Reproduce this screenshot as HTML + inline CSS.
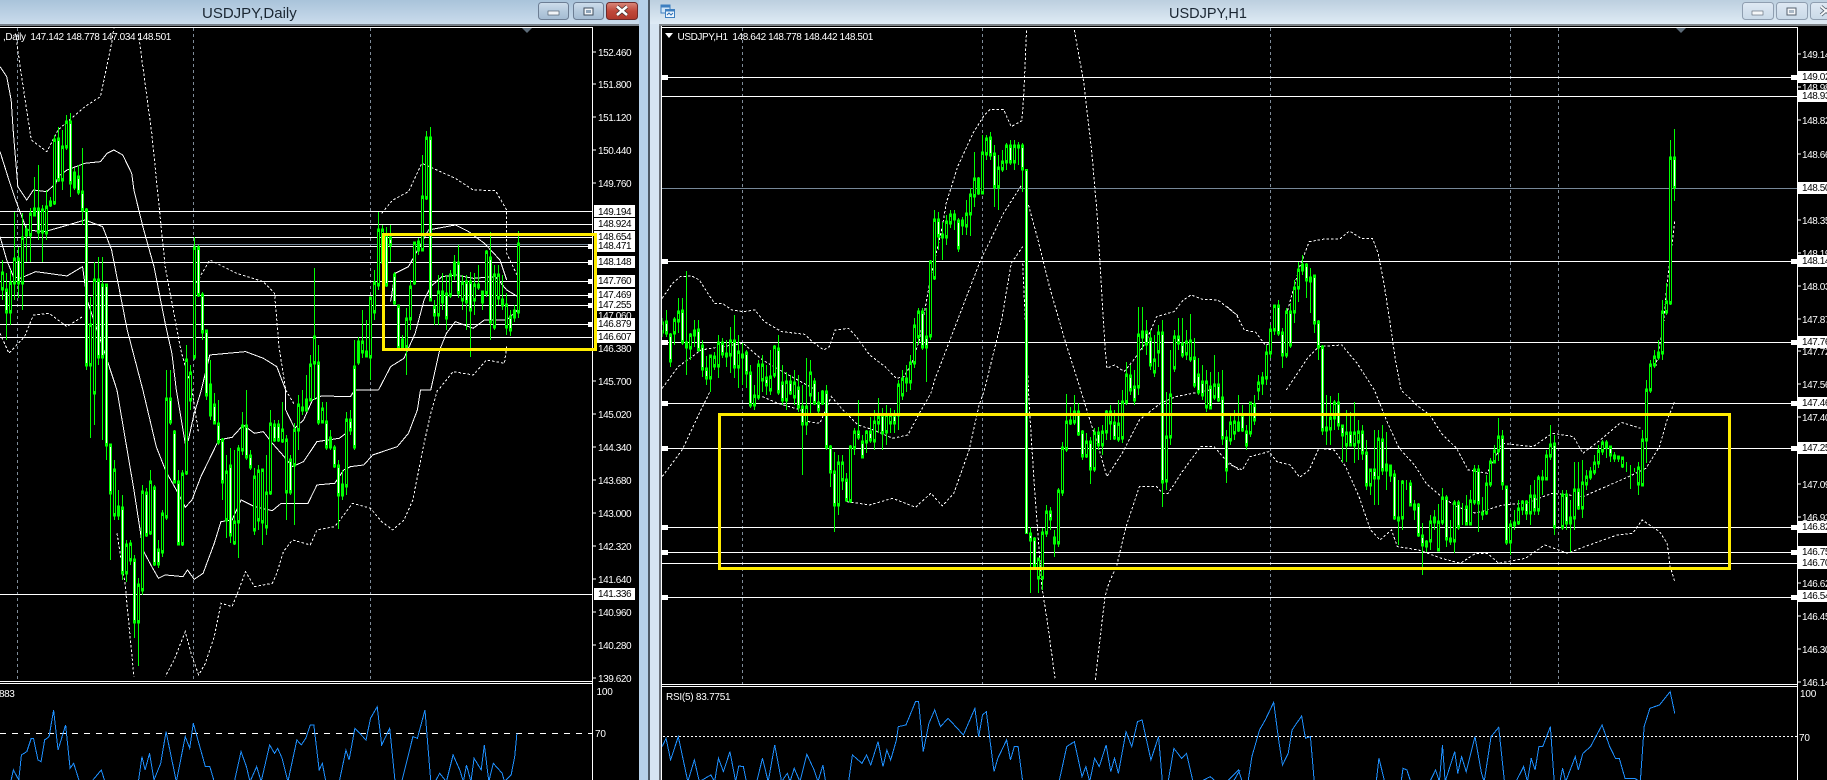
<!DOCTYPE html>
<html><head><meta charset="utf-8"><title>USDJPY charts</title>
<style>
html,body{margin:0;padding:0;background:#000;width:1827px;height:780px;overflow:hidden}
svg{display:block;position:absolute;left:0;top:0}
.l{font:10px "Liberation Sans",sans-serif;letter-spacing:-.43px;fill:#fff}
.b{font:10px "Liberation Sans",sans-serif;letter-spacing:-.43px;fill:#000}
.t{font:15px "Liberation Sans",sans-serif;fill:#1b2733}
.d polyline{fill:none;stroke:#fff;stroke-width:1;stroke-dasharray:2.5 2;vector-effect:non-scaling-stroke}
.s polyline{fill:none;stroke:#fff;stroke-width:1;vector-effect:non-scaling-stroke}
.r polyline{fill:none;stroke:#1e90ff;stroke-width:1;vector-effect:non-scaling-stroke}
</style></head><body>
<svg width="1827" height="780" viewBox="0 0 1827 780" xmlns="http://www.w3.org/2000/svg">
<defs>
<linearGradient id="g1" x1="0" y1="0" x2="0" y2="1"><stop offset="0" stop-color="#a9c3da"/><stop offset="1" stop-color="#cadcec"/></linearGradient>
<linearGradient id="g2" x1="0" y1="0" x2="0" y2="1"><stop offset="0" stop-color="#bccfdf"/><stop offset="1" stop-color="#dfebf5"/></linearGradient>
<linearGradient id="bt" x1="0" y1="0" x2="0" y2="1"><stop offset="0" stop-color="#cfdeec"/><stop offset=".5" stop-color="#b5cadd"/><stop offset="1" stop-color="#a3bbd2"/></linearGradient>
<linearGradient id="bt2" x1="0" y1="0" x2="0" y2="1"><stop offset="0" stop-color="#dfe9f3"/><stop offset="1" stop-color="#c9d9e8"/></linearGradient>
<linearGradient id="rd" x1="0" y1="0" x2="0" y2="1"><stop offset="0" stop-color="#d9897c"/><stop offset=".5" stop-color="#c0483a"/><stop offset="1" stop-color="#b0392c"/></linearGradient>
<clipPath id="cl"><rect x="0" y="28" width="592" height="653"/></clipPath>
<clipPath id="cli"><rect x="0" y="685" width="592" height="95"/></clipPath>
<clipPath id="cr"><rect x="662" y="28" width="1135" height="656"/></clipPath>
<clipPath id="cri"><rect x="662" y="687" width="1135" height="93"/></clipPath>
</defs>
<!-- frames -->
<rect width="1827" height="780" fill="#000"/>
<rect x="0" y="0" width="648" height="24" fill="url(#g1)"/>
<rect x="0" y="24" width="639" height="2" fill="#767f88"/>
<rect x="639" y="0" width="9" height="780" fill="#b6d1ea"/>
<rect x="648" y="0" width="2" height="780" fill="#4c5966"/>
<rect x="650" y="0" width="1177" height="24" fill="url(#g2)"/>
<rect x="650" y="24" width="10" height="756" fill="#d7e5f2"/>
<rect x="659" y="24" width="1168" height="2" fill="#7d8388"/>
<rect x="659" y="26" width="2" height="754" fill="#6a7078"/>
<!-- titles -->
<text class="t" x="202" y="18">USDJPY,Daily</text>
<text class="t" x="1169" y="18" style="font-size:14.5px">USDJPY,H1</text>
<!-- left buttons -->
<rect x="538.5" y="2.5" width="30" height="17" rx="3" fill="url(#bt)" stroke="#6d7e94"/>
<rect x="548" y="11" width="11" height="4" fill="#f2f5f8" stroke="#3f4d5c" stroke-width=".6"/>
<rect x="573.5" y="2.5" width="30" height="17" rx="3" fill="url(#bt)" stroke="#6d7e94"/>
<rect x="584" y="8" width="9" height="7" fill="#f2f5f8" stroke="#3f4d5c"/><rect x="586" y="10" width="5" height="3" fill="#8fa5ba"/>
<rect x="606.5" y="2.5" width="31" height="17" rx="3" fill="url(#rd)" stroke="#6e2a2a"/>
<path d="M617 6.5L627 15M627 6.5L617 15" stroke="#3a2a2a" stroke-width="4"/>
<path d="M617 6.5L627 15M627 6.5L617 15" stroke="#fff" stroke-width="2.6"/>
<!-- right buttons -->
<rect x="1742.5" y="2.5" width="31" height="17" rx="3" fill="url(#bt2)" stroke="#8f9eb0"/>
<rect x="1752" y="11" width="11" height="4" fill="#f5f7f9" stroke="#55616e" stroke-width=".6"/>
<rect x="1776.5" y="2.5" width="31" height="17" rx="3" fill="url(#bt2)" stroke="#8f9eb0"/>
<rect x="1787" y="8" width="9" height="7" fill="#f5f7f9" stroke="#55616e"/><rect x="1789" y="10" width="5" height="3" fill="#aab8c6"/>
<rect x="1810.5" y="2.5" width="31" height="17" rx="3" fill="url(#bt2)" stroke="#8f9eb0"/>
<path d="M1821 6.5L1831 15M1831 6.5L1821 15" stroke="#55616e" stroke-width="3.6"/>
<path d="M1821 6.5L1831 15M1831 6.5L1821 15" stroke="#f5f7f9" stroke-width="2"/>
<!-- window icon -->
<rect x="661" y="5" width="9" height="8" fill="#cfe4f7" stroke="#3d7fc0"/><rect x="661" y="5" width="9" height="2.5" fill="#3d7fc0"/>
<rect x="665.5" y="9.5" width="9" height="8" fill="#eef6fd" stroke="#3d7fc0"/><rect x="665.5" y="9.5" width="9" height="2" fill="#3d7fc0"/>
<path d="M667 15L669 13L671 15L673 13" stroke="#2c6fb5" fill="none"/>

<g shape-rendering="crispEdges">
<!-- left chart border & separators -->
<path d="M0 27.5H592.5V780M0 681.5H592M0 683.5H592" stroke="#fff" fill="none"/>
<!-- left grid -->
<path d="M17.5 28V681M193.5 28V681M370.5 28V681" stroke="#7f8c99" stroke-dasharray="3 3" fill="none"/>
<path d="M0 244.5H592" stroke="#778899"/>
<path d="M0 211.5H592M0 224.5H592M0 237.5H592M0 246.5H592M0 262.5H592M0 281.5H592M0 295.5H592M0 305.5H592M0 324.5H592M0 337.5H592M0 594.5H592" stroke="#fff" fill="none"/>
<path d="M592 52H596M592 84H596M592 117H596M592 150H596M592 183H596M592 381H596M592 414H596M592 447H596M592 480H596M592 513H596M592 546H596M592 579H596M592 612H596M592 645H596M592 678H596" stroke="#fff"/>
<!-- left bands -->
<g clip-path="url(#cl)">
<g transform="scale(.4464 .3333)">
<g class="s">
<polyline points="0,200 15,230 25,300 30,400 40,560 60,600 75,570 105,575 125,550 130,530 150,510 170,500 190,490 225,485 240,460 255,450 275,465 295,520 300,570 320,680 345,800 370,970 385,1060 395,1170 415,1330 422,1320 435,1240 450,1175 470,1065 550,1055 590,1075 620,1100 640,1170 640,1230 660,1285 680,1260 700,1200 720,1188 785,1190 795,1170 848,1170"/>
<polyline points="0,455 20,540 35,600 60,690 100,695 140,680 190,660 230,680 250,750 285,990 320,1170 350,1340 372,1415 395,1470 415,1522 430,1500 450,1430 490,1320 520,1312 545,1275 570,1300 590,1295 610,1330 630,1360 655,1400 680,1385 710,1325 760,1315 775,1300"/>
<polyline points="0,710 15,780 30,830 45,835 80,815 150,828 185,800 195,900 225,1020 262,1170 300,1470 315,1600 320,1650 340,1700 355,1735 370,1725 410,1730 420,1710 435,1738 455,1720 480,1630 495,1565 520,1560 540,1500 570,1520 610,1532 630,1510 690,1510 710,1455 750,1450 770,1410 785,1400 815,1395 835,1365 890,1340 915,1300 935,1230 942,1170 965,1170 985,1050"/>
<polyline points="848,1170 875,1100 905,1075 930,1000 950,900 965,860 990,830 1020,825 1060,835 1110,830 1135,870 1160,890"/>
<polyline points="875,905 885,820 915,800 940,740 960,690 1020,675 1050,695 1085,730 1120,780 1135,840"/>
<polyline points="965,1170 985,1050 1000,1000 1020,965 1060,985 1085,960 1135,960 1160,930"/>
</g>
<g class="d">
<polyline points="35,100 45,200 70,420 105,455 130,390 190,320 225,290 250,130 255,85"/>
<polyline points="310,100 340,400 370,800 405,1050 430,1170 445,1300"/>
<polyline points="0,1000 20,1060 55,1010 75,945 110,940 150,980 185,950"/>
<polyline points="435,860 470,780 530,820 590,845 615,880 625,1040 640,1170 660,1215"/>
<polyline points="855,640 880,600 915,575 945,490 1020,535 1060,570 1110,572 1135,630 1135,760 1160,830"/>
<polyline points="985,1165 1015,1115 1060,1125 1090,1080 1130,1090 1135,1040"/>
<polyline points="980,1170 965,1240 950,1330 935,1430 925,1500 905,1560 880,1590 855,1565 830,1525 790,1510 770,1545 750,1580 710,1590 695,1635 655,1620 635,1655 620,1720 610,1750 570,1760 550,1715 535,1770 520,1820 495,1810 480,1910 460,1990 445,2025 430,1970 415,1895 390,1980 370,2030"/>
<polyline points="262,1600 280,1750 295,1960 300,2030"/>
</g>
</g>
</g>
<!-- left candles -->
<g transform="translate(.5 0)" clip-path="url(#cl)" fill="none">
<path stroke="#0f0" d="M2 260V300M6 273V340M10 270V325M14 212V300M18 247V298M22 213V310M26 225V262M30 208V262M34 177V215M38 165V240M42 205V262M46 190V240M50 197V207M54 135V205M58 127V182M62 130V190M66 115V150M70 113V197M74 168V190M78 165V195M82 148V225M86 208V370M90 297V438M94 262V425M98 257V365M102 257V440M106 285V460M110 445V560M114 460V520M118 490V520M122 495V580M126 540V582M130 540V565M134 555V638M138 578V666M142 485V595M146 488V537M150 470V535M154 485V566M158 540V568M162 510V557M166 370V520M170 370V425M174 430V483M178 470V545M182 470V546M186 345V475M190 365V410M194 237V360M198 245V297M202 292V340M206 330V400M210 360V420M214 393V423M218 400V445M222 438V500M226 455V538M230 448V543M234 450V545M238 445V558M242 412V455M246 390V460M250 450V470M254 468V535M258 465V530M262 470V545M266 455V535M270 410V495M274 420V442M278 420V442M282 402V443M286 435V520M290 455V495M294 423V525M298 395V450M302 390V415M306 375V412M310 355V400M314 268V400M318 345V425M322 402V415M326 402V450M330 430V450M334 445V468M338 460V529M342 470V500M346 412V495M350 410V435M354 340V450M358 337V365M362 310V358M366 320V357M370 297V380M374 270V320M378 212V290M382 225V265M386 227V287M390 225V262M394 272V305M398 306V350M402 335V348M406 308V375M410 280V330M414 243V285M418 238V255M422 155V250M426 131V200M430 127V300M434 300V325M438 275V325M442 273V310M446 275V330M450 270V298M454 255V280M458 245V298M462 275V310M466 275V330M470 272V357M474 273V315M478 265V290M482 292V310M486 250V297M490 232V340M494 265V330M498 265V305M502 275V310M506 293V335M510 310V336M514 305V322M518 231V318"/>
<path id="lk" stroke="#0f0" stroke-width="3" stroke-linecap="square" d="M2 273V289M10 283V312M14 259V283M22 238V283M26 230V235M30 214V235M34 209V215M42 210V232M46 207V233M50 202V205M54 140V203M62 147V180M66 122V147M74 173V187M90 325V365M94 280V393M114 470V515M126 545V573M130 544V560M138 585V622M142 492V590M150 482V533M162 514V552M166 399V517M182 474V544M186 360V473M190 373V400M194 248V357M210 385V415M226 472V520M234 522V543M238 449V522M242 426V450M254 477V530M258 471V520M262 470V522M266 493V527M270 424V493M282 430V441M286 440V492M294 430V465M298 405V430M302 408V410M306 400V410M310 365V400M314 337V363M322 409V422M330 438V447M342 485V495M346 420V486M358 342V362M362 342V352M366 352V356M370 298V357M374 283V312M378 230V285M382 230V262M406 319V347M410 287V319M414 243V283M418 242V250M422 197V250M426 138V198M438 292V315M442 292V302M450 275V295M454 263V275M462 283V300M474 285V300M482 292V302M486 252V293M494 275V327M498 275V298M506 305V327M514 311V317M518 244V312"/>
<path id="lw" stroke="#0f0" stroke-width="3" stroke-linecap="square" d="M6 290V312M18 259V283M38 209V232M58 139V180M70 122V183M78 177V192M82 192V210M86 210V365M98 280V357M102 285V357M106 285V445M110 445V493M118 507V515M122 508V573M134 560V622M146 493V535M154 488V564M158 550V564M170 399V422M174 432V482M178 482V544M198 248V295M202 295V332M206 331V395M214 405V423M218 424V442M222 440V482M230 466V535M246 426V457M250 456V467M274 425V440M278 425V440M290 460V492M318 363V422M326 422V447M334 448V466M338 466V495M350 420V430M354 367V447M386 235V285M390 238V245M394 275V303M398 306V348M402 340V347M430 138V300M434 307V315M446 294V318M458 263V293M466 282V302M470 282V310M478 285V287M490 258V322M502 300V305M510 317V330"/>
<path stroke="#000" d="M2 275V287M10 285V310M14 261V281M22 240V281M30 216V233M42 212V230M46 209V231M54 142V201M62 149V178M66 124V145M90 327V363M94 282V391M114 472V513M126 547V571M130 546V558M138 587V620M142 494V588M150 484V531M162 516V550M166 401V515M182 476V542M186 362V471M190 375V398M194 250V355M226 474V518M234 524V541M238 451V520M242 428V448M254 479V528M258 473V518M262 472V520M266 495V525M270 426V491M282 432V439M286 442V490M294 432V463M298 407V428M310 367V398M314 339V361M322 411V420M346 422V484M362 344V350M370 300V355M374 285V310M378 232V283M382 232V260M406 321V345M410 289V317M414 245V281M422 199V248M426 140V196M438 294V313M450 277V293M462 285V298M474 287V298M486 254V291M494 277V325M498 277V296M506 307V325M518 246V310"/>
<path stroke="#fff" d="M6 292V310M18 261V281M38 211V230M58 141V178M70 124V181M78 179V190M82 194V208M86 212V363M98 282V355M102 287V355M106 287V443M110 447V491M122 510V571M134 562V620M146 495V533M154 490V562M158 552V562M170 401V420M174 434V480M178 484V542M198 250V293M202 297V330M206 333V393M214 407V421M218 426V440M222 442V480M230 468V533M246 428V455M250 458V465M274 427V438M278 427V438M290 462V490M318 365V420M326 424V445M334 450V464M338 468V493M350 422V428M354 369V445M386 237V283M390 240V243M394 277V301M398 308V346M430 140V298M434 309V313M446 296V316M458 265V291M466 284V300M470 284V308M490 260V320M510 319V328"/>
</g>
<!-- left rsi -->
<g clip-path="url(#cli)"><g transform="translate(0 390) scale(.4464 .3333)">
<path d="M0 1030.5H1327" stroke="#fff" stroke-dasharray="6 6" vector-effect="non-scaling-stroke" fill="none"/>
<g class="r"><polyline points="25,1170 30,1140 42,1170 48,1095 60,1085 70,1045 75,1045 85,1110 92,1115 100,1050 110,1040 120,960 130,1080 147,1005 157,1135 165,1120 178,1175 205,1175 227,1140 235,1175 310,1175 318,1100 325,1140 335,1090 345,1170 360,1120 372,1025 395,1175 415,1040 425,1075 433,1000 460,1130 470,1130 480,1175 525,1175 540,1085 552,1130 560,1175 575,1130 585,1175 604,1065 615,1090 622,1075 632,1105 645,1175 665,1050 675,1065 685,1045 695,1005 703,1005 715,1140 722,1120 730,1175 760,1175 775,1080 782,1110 795,1015 820,1050 830,985 845,950 855,1065 873,1015 885,1175 900,1175 925,1040 935,1045 952,960 965,1175 975,1175 985,1150 1000,1175 1015,1095 1030,1140 1038,1175 1045,1125 1055,1175 1062,1105 1078,1140 1085,1065 1095,1175 1105,1120 1125,1150 1130,1175 1145,1155 1153,1100 1158,1030"/></g>
</g></g>

<!-- right chart border -->
<path d="M661.5 26V780M661 27.5H1797.5V780M661 684.5H1797M661 686.5H1797" stroke="#fff" fill="none"/>
<path d="M742.5 28V684M982.5 28V684M1270.5 28V684M1510.5 28V684M1558.5 28V684" stroke="#7f8c99" stroke-dasharray="3 3" fill="none"/>
<path d="M662 188.5H1797" stroke="#778899"/>
<path d="M662 77.5H1797M662 96.5H1797M662 261.5H1797M662 342.5H1797M662 403.5H1797M662 448.5H1797M662 527.5H1797M662 552.5H1797M662 563.5H1797M662 597.5H1797" stroke="#fff" fill="none"/>
<path d="M1797 54H1801M1797 87H1801M1797 120H1801M1797 154H1801M1797 220H1801M1797 253H1801M1797 286H1801M1797 319H1801M1797 351H1801M1797 384H1801M1797 417H1801M1797 484H1801M1797 517H1801M1797 583H1801M1797 616H1801M1797 649H1801M1797 682H1801" stroke="#fff"/>
<!-- right bands -->
<g clip-path="url(#cr)">
<g class="d">
<g transform="translate(640 0) scale(.3827 .3333)">
<polyline points="58,895 85,850 105,830 135,828 155,840 180,885 195,910 215,910 240,930 270,935 300,930 325,965 370,995 430,1003 450,1025 480,1050 495,1040 510,990 545,985 565,1010 600,1065 640,1100 670,1135 690,1130 710,1090 730,1020 760,830 790,680 800,610 830,500 870,400 900,345 915,328 950,328 970,380 998,362 1003,280 1010,90"/>
<polyline points="1135,90 1160,250 1180,450 1195,650 1205,850 1215,1040 1220,1105 1240,1095 1265,1115 1290,1080 1320,1030 1350,950 1395,935 1420,900 1440,885 1470,898 1510,900 1565,950"/>
<polyline points="58,1165 100,1100 160,1050 270,1030 320,1080 380,1120 460,1170"/>
<polyline points="320,1190 360,1210 420,1230 440,1265 470,1270 500,1190 530,1230 570,1275 610,1290 660,1315 700,1305 730,1240 760,1180 770,1140 810,1020 890,780 950,640 1000,550"/>
<polyline points="540,1505 600,1515 660,1495 720,1522 760,1480 790,1518 820,1480 860,1350 885,1220 900,1170 945,960 970,790 1000,740"/>
<polyline points="58,1430 110,1350 155,1240 185,1170"/>
<polyline points="1015,615 1040,720 1070,860 1110,1020 1150,1165 1200,1350 1220,1430 1260,1360 1305,1260 1360,1210 1400,1190 1490,1170"/>
<polyline points="1000,790 1015,1170 1020,1270 1030,1450 1050,1760 1065,1870 1085,2040"/>
<polyline points="1190,2040 1215,1790 1225,1750 1245,1700 1270,1580 1305,1460 1350,1460 1365,1480 1380,1480 1420,1410 1465,1340 1500,1340 1530,1380 1565,1410"/>
</g>
<g transform="translate(1227 0) scale(.3827 .3333)">
<polyline points="0,920 25,945 45,990 75,997 100,1035 115,1030"/>
<polyline points="155,945 190,800 215,725 255,717 295,717 320,693 350,715 380,715 395,760 410,850 425,960 440,1080 455,1170 495,1215 530,1245 560,1300 600,1345 630,1410 680,1420 720,1330 800,1340 850,1300 905,1310 930,1360 970,1325 1030,1267 1080,1285"/>
<polyline points="155,1170 210,1075 240,1040 300,1035 340,1090 385,1170 420,1270 450,1345 490,1395 520,1450 560,1490 600,1520 650,1540 720,1515 780,1510 850,1480 930,1490 990,1460 1050,1430 1095,1405 1130,1340 1150,1260 1170,1205"/>
<polyline points="1120,1100 1140,980 1150,850 1165,710 1170,665"/>
<polyline points="0,1390 40,1410 60,1370 110,1355 130,1385 165,1395 190,1432 215,1410 240,1345 280,1350 310,1400 345,1490 375,1590 400,1620 430,1590 445,1640 500,1650 560,1675 610,1690 650,1660 680,1660 710,1690 780,1675 830,1635 890,1660 935,1640 1020,1605 1060,1600 1085,1560 1130,1595 1150,1630 1158,1700 1170,1745" stroke-dasharray="2.5 2"/>
</g>
</g>
</g>
<!-- right candles -->
<g transform="translate(.5 0)" clip-path="url(#cr)" fill="none">
<path stroke="#0f0" d="M662 318V337M666 310V337M670 333V367M674 317V345M678 298V333M682 298V345M686 271V375M690 333V360M694 320V347M698 320V350M702 340V377M706 356V385M710 355V392M714 352V370M718 335V378M722 338V358M726 340V367M730 327V373M734 315V378M738 335V388M742 343V385M746 350V388M750 365V408M754 385V410M758 360V400M762 355V392M766 365V395M770 350V395M774 345V378M778 335V395M782 365V405M786 372V410M790 375V395M794 370V405M798 375V412M802 385V475M806 358V435M810 360V415M814 378V405M818 392V415M822 390V405M826 385V450M830 445V487M834 452V532M838 455V515M842 455V490M846 473V502M850 445V503M854 428V455M858 400V440M862 435V457M866 430V453M870 417V443M874 410V450M878 398V433M882 408V450M886 405V445M890 408V433M894 410V433M898 380V430M902 370V400M906 365V392M910 355V390M914 318V368M918 308V345M922 308V350M926 308V382M930 260V340M934 210V280M938 212V250M942 222V260M946 215V245M950 210V228M954 210V230M958 218V252M962 217V235M966 200V235M970 188V236M974 152V207M978 177V195M982 135V193M986 135V160M990 132V160M994 145V207M998 155V210M1002 150V172M1006 143V170M1010 140V165M1014 140V170M1018 142V165M1022 143V192M1030 527V593M1034 537V570M1038 558V593M1042 528V590M1046 505V537M1050 507V530M1054 530V557M1058 488V547M1062 442V496M1066 394V452M1070 407V425M1074 395V425M1078 403V436M1082 430V460M1086 433V458M1090 437V484M1094 428V472M1098 427V450M1102 425V455M1106 410V440M1110 405V440M1114 410V440M1118 400V442M1122 390V443M1126 362V405M1130 365V395M1134 370V405M1138 307V395M1142 307V350M1146 320V355M1150 330V370M1154 335V377M1158 325V367M1162 320V507M1166 392V490M1170 350V445M1174 330V372M1178 318V350M1182 318V358M1186 330V360M1190 314V362M1194 338V388M1198 358V395M1202 365V400M1206 370V412M1210 372V408M1214 355V400M1218 372V402M1222 370V445M1226 430V483M1230 415V445M1234 410V440M1238 395V432M1242 405V432M1246 425V450M1250 403V437M1254 395V425M1258 375V400M1262 372V395M1266 345V385M1270 325V358M1274 305V335M1278 300V336M1282 328V368M1286 308V358M1290 303V348M1294 280V323M1298 262V302M1302 255V275M1306 263V298M1310 268V313M1314 275V333M1318 320V360M1322 345V435M1326 395V445M1330 396V445M1334 400V430M1338 393V430M1342 425V462M1346 410V462M1350 412V445M1354 402V463M1358 420V460M1362 425V460M1366 440V490M1370 470V495M1374 430V505M1378 430V505M1382 425V475M1386 432V490M1390 467V482M1394 470V520M1398 480V545M1402 480V530M1406 480V490M1410 480V505M1414 500V520M1418 503V537M1422 523V575M1426 540V552M1430 515V550M1434 510V530M1438 504V550M1442 488V525M1446 495V547M1450 520V545M1454 500V553M1458 500V530M1462 503V525M1466 495V525M1470 490V525M1474 465V505M1478 465V532M1482 497V520M1486 475V515M1490 458V487M1494 445V462M1498 418V461M1502 430V490M1506 487V545M1510 520V555M1514 510V530M1518 500V525M1522 500V515M1526 500V520M1530 485V525M1534 480V515M1538 475V515M1542 470V495M1546 450V480M1550 425V460M1554 435V535M1562 490V530M1566 490V530M1570 500V552M1574 462V530M1578 462V510M1582 460V518M1586 470V490M1590 467V480M1594 455V475M1598 445V468M1602 440V455M1606 440V458M1610 447V462M1614 452V462M1618 456V462M1622 458V468M1626 462V472M1630 465V489M1634 468V472M1638 462V495M1642 430V485M1646 380V463M1650 360V393M1654 350V368M1658 340V360M1662 300V360M1666 283V315M1670 140V305M1674 129V201"/>
<path stroke="#0f0" stroke-width="3" stroke-linecap="square" d="M662 323V332M674 320V333M678 312V321M690 335V348M694 331V335M710 356V378M714 357V366M718 343V366M730 341V355M738 352V367M754 396V405M758 365V397M762 365V380M770 377V390M774 347V375M786 382V400M794 383V397M806 407V424M810 373V395M822 392V403M838 463V505M842 463V480M850 447V501M854 432V448M866 432V442M874 422V441M878 417V423M886 415V432M890 415V423M898 385V415M902 379V395M906 379V382M910 363V382M914 326V363M918 312V337M930 262V336M934 220V278M942 235V237M946 222V237M950 215V223M962 221V225M966 214V226M970 195V214M974 179V196M982 153V193M986 139V154M998 168V187M1002 162V169M1006 146V162M1014 146V162M1018 146V147M1038 559V578M1042 533V578M1046 512V533M1058 491V543M1062 448V492M1066 422V449M1070 421V423M1074 412V422M1086 442V456M1094 433V469M1102 432V445M1106 412V432M1110 412V423M1118 424V439M1122 402V438M1126 375V402M1138 335V387M1142 332V337M1154 360V372M1158 333V352M1166 437V481M1170 395V437M1174 337V368M1186 342V354M1190 341V359M1206 382V407M1214 385V397M1230 423V440M1234 422V433M1238 423V430M1250 403V433M1258 383V390M1262 378V383M1266 353V378M1270 330V353M1274 306V330M1286 312V355M1294 288V312M1298 270V288M1302 265V270M1330 418V429M1334 403V418M1346 433V445M1354 433V445M1358 432V442M1370 470V485M1378 439V478M1386 465V470M1398 518V520M1402 482V518M1414 505V509M1430 522V541M1434 518V522M1438 522V550M1442 498V522M1450 539V541M1454 503V541M1470 501V524M1474 470V502M1482 513V514M1486 484V513M1490 462V484M1494 451V462M1498 437V451M1510 525V542M1514 523V525M1518 509V523M1522 502V509M1530 496V513M1538 478V510M1546 456V479M1550 445V456M1562 495V527M1570 518V523M1574 490V518M1582 483V508M1586 477V484M1590 472V477M1594 463V472M1598 451V463M1602 443V451M1606 443V447M1618 457V458M1622 458V466M1638 468V484M1642 440V485M1646 390V440M1650 365V390M1654 357V365M1658 353V357M1662 312V353M1666 302V312M1670 158V303"/>
<path stroke="#0f0" stroke-width="3" stroke-linecap="square" d="M666 322V333M670 335V361M682 311V342M686 343V347M698 330V350M702 346V369M706 369V378M722 343V354M726 354V356M734 341V367M742 355V357M746 353V373M750 373V405M766 378V385M778 349V392M782 383V400M790 382V393M798 388V407M802 407V424M814 382V403M818 403V410M826 392V447M830 447V472M834 472V505M846 480V500M858 432V437M862 442V457M870 432V440M882 415V433M894 415V423M922 312V347M926 337V347M938 220V236M954 215V219M958 221V248M978 179V193M990 138V155M994 154V187M1010 146V162M1022 146V169M1030 534V540M1034 539V566M1050 512V519M1054 538V543M1078 412V434M1082 432V456M1090 442V469M1098 433V445M1114 423V438M1130 376V390M1134 387V400M1146 332V344M1150 339V365M1162 333V482M1178 337V343M1182 344V355M1194 358V385M1198 375V392M1202 382V395M1210 387V408M1218 385V400M1222 398V438M1226 438V470M1242 415V430M1246 432V445M1254 405V420M1278 306V333M1282 333V355M1290 312V345M1306 265V280M1310 278V281M1314 276V323M1318 322V347M1322 347V430M1326 428V430M1338 403V425M1342 426V435M1350 433V445M1362 432V453M1366 453V485M1374 470V478M1382 440V470M1390 466V475M1394 475V518M1410 484V505M1418 505V535M1422 536V545M1426 542V546M1446 498V539M1458 503V527M1466 507V524M1478 470V503M1502 437V484M1506 487V542M1526 502V513M1534 496V510M1542 478V479M1554 444V527M1566 495V523M1578 490V508M1610 447V455M1614 456V458M1674 158V187"/>
<path stroke="#0f0" stroke-width="3" d="M1026 169V534"/>
<path stroke="#000" d="M662 325V330M674 322V331M678 314V319M690 337V346M710 358V376M714 359V364M718 345V364M730 343V353M738 354V365M754 398V403M758 367V395M762 367V378M770 379V388M774 349V373M786 384V398M794 385V395M806 409V422M810 375V393M838 465V503M842 465V478M850 449V499M854 434V446M866 434V440M874 424V439M878 419V421M886 417V430M890 417V421M898 387V413M902 381V393M910 365V380M914 328V361M918 314V335M930 264V334M934 222V276M946 224V235M950 217V221M966 216V224M970 197V212M974 181V194M982 155V191M986 141V152M998 170V185M1002 164V167M1006 148V160M1014 148V160M1038 561V576M1042 535V576M1046 514V531M1058 493V541M1062 450V490M1066 424V447M1074 414V420M1086 444V454M1094 435V467M1102 434V443M1106 414V430M1110 414V421M1118 426V437M1122 404V436M1126 377V400M1138 337V385M1154 362V370M1158 335V350M1166 439V479M1170 397V435M1174 339V366M1186 344V352M1190 343V357M1206 384V405M1214 387V395M1230 425V438M1234 424V431M1250 405V431M1258 385V388M1266 355V376M1270 332V351M1274 308V328M1286 314V353M1294 290V310M1298 272V286M1330 420V427M1334 405V416M1346 435V443M1354 435V443M1358 434V440M1370 472V483M1378 441V476M1402 484V516M1430 524V539M1438 524V548M1442 500V520M1454 505V539M1470 503V522M1474 472V500M1486 486V511M1490 464V482M1494 453V460M1498 439V449M1510 527V540M1518 511V521M1522 504V507M1530 498V511M1538 480V508M1546 458V477M1550 447V454M1562 497V525M1574 492V516M1582 485V506M1586 479V482M1594 465V470M1598 453V461M1602 445V449M1622 460V464M1638 470V482M1642 442V483M1646 392V438M1650 367V388M1654 359V363M1662 314V351M1666 304V310M1670 160V301"/>
<path stroke="#fff" d="M666 324V331M670 337V359M682 313V340M698 332V348M702 348V367M706 371V376M722 345V352M734 343V365M746 355V371M750 375V403M766 380V383M778 351V390M782 385V398M790 384V391M798 390V405M802 409V422M814 384V401M818 405V408M826 394V445M830 449V470M834 474V503M846 482V498M858 434V435M862 444V455M870 434V438M882 417V431M894 417V421M922 314V345M926 339V345M938 222V234M958 223V246M990 140V153M994 156V185M1010 148V160M1022 148V167M1026 171V533M1030 536V538M1034 541V564M1050 514V517M1078 414V432M1082 434V454M1090 444V467M1098 435V443M1114 425V436M1130 378V388M1134 389V398M1146 334V342M1150 341V363M1162 335V480M1178 339V341M1182 346V353M1194 360V383M1198 377V390M1202 384V393M1210 389V406M1218 387V398M1222 400V436M1226 440V468M1242 417V428M1246 434V443M1254 407V418M1278 308V331M1282 335V353M1290 314V343M1306 267V278M1314 278V321M1318 324V345M1322 349V428M1338 405V423M1342 428V433M1350 435V443M1362 434V451M1366 455V483M1374 472V476M1382 442V468M1394 477V516M1410 486V503M1418 507V533M1422 538V543M1446 500V537M1458 505V525M1466 509V522M1478 472V501M1502 439V482M1506 489V540M1526 504V511M1534 498V508M1554 446V525M1566 497V521M1578 492V506M1610 449V453M1674 160V186"/>
</g>
<!-- right rsi -->
<g clip-path="url(#cri)">
<path d="M663 736.5H1797" stroke="#fff" stroke-dasharray="2 2" fill="none"/>
<g class="r">
<g transform="translate(640 390) scale(.3827 .3333)"><polyline points="58,1070 68,1045 80,1110 100,1040 125,1175 142,1110 155,1175 185,1155 195,1175 205,1105 218,1145 235,1085 250,1175 258,1128 270,1130 278,1175 305,1175 320,1105 335,1175 352,1065 370,1175 385,1150 392,1175 403,1135 418,1175 436,1093 455,1140 465,1175 478,1125 485,1175 545,1175 555,1095 580,1120 592,1095 603,1125 622,1055 635,1130 645,1080 655,1110 670,1050 675,1010 695,1005 720,935 728,935 740,1085 755,1000 770,960 785,1010 805,985 845,1035 875,955 885,1040 895,975 905,965 925,1145 935,1105 958,1050 968,1110 978,1070 988,1070 1000,1175 1095,1175 1115,1070 1135,1055 1155,1160 1165,1130 1175,1175 1188,1105 1200,1130 1218,1065 1230,1145 1240,1105 1250,1150 1270,1025 1285,1070 1300,995 1312,990 1335,1110 1355,1040 1365,1175 1380,1175 1395,1075 1415,1105 1428,1090 1445,1175 1465,1175 1490,1160 1505,1175 1550,1175 1568,1140"/></g>
<g transform="translate(1227 390) scale(.3827 .3333)"><polyline points="0,1175 30,1140 40,1175 55,1175 65,1100 85,1020 100,990 122,937 135,1050 145,1125 160,1090 170,1020 195,978 205,1045 218,1040 228,1175 390,1175 397,1105 412,1175 455,1175 460,1135 470,1140 480,1175 530,1175 545,1140 555,1175 563,1065 570,1175 595,1085 603,1150 613,1100 625,1145 648,1040 665,1150 672,1175 690,1040 710,1012 725,1175 755,1175 775,1130 785,1175 795,1105 805,1140 815,1070 825,1070 845,1010 855,1175 870,1175 877,1135 885,1175 910,1100 918,1140 930,1090 950,1070 980,1005 1000,1070 1015,1105 1025,1105 1040,1165 1065,1165 1080,1175 1090,1010 1105,955 1130,945 1158,905 1170,970"/></g>
</g>
</g>
<!-- markers -->
<path fill="#fff" d="M588 244h5v5h-5zM588 260h5v5h-5zM588 279h5v5h-5zM588 293h5v5h-5zM588 303h5v5h-5zM588 322h5v5h-5zM662 75h6v5h-6zM662 259h6v5h-6zM662 340h6v5h-6zM662 401h6v5h-6zM662 446h6v5h-6zM662 525h6v5h-6zM662 550h6v5h-6zM662 595h6v5h-6zM1791 75h6v5h-6zM1791 259h6v5h-6zM1791 340h6v5h-6zM1791 401h6v5h-6zM1791 446h6v5h-6zM1791 525h6v5h-6zM1791 550h6v5h-6zM1791 595h6v5h-6z"/>
</g>
<!-- small triangles -->
<path d="M522 28H532L527 33Z" fill="#5c6b78"/>
<path d="M1676 28H1686L1681 33Z" fill="#5c6b78"/>
<path d="M665 33H673L669 38Z" fill="#fff"/>
<!-- info text -->
<text class="l" x="3" y="40" style="letter-spacing:-.4px" xml:space="preserve">,Daily  147.142 148.778 147.034 148.501</text>
<text class="l" x="677.5" y="40" style="letter-spacing:-.4px" xml:space="preserve">USDJPY,H1  148.642 148.778 148.442 148.501</text>
<text class="l" x="666" y="700" style="letter-spacing:-.25px">RSI(5) 83.7751</text>
<text class="l" x="-1" y="697">883</text>
<!-- left axis -->
<g>
<text class="l" x="598" y="56">152.460</text><text class="l" x="598" y="88">151.800</text><text class="l" x="598" y="121">151.120</text><text class="l" x="598" y="154">150.440</text><text class="l" x="598" y="187">149.760</text>
<text class="l" x="598" y="319">147.060</text><text class="l" x="598" y="352">146.380</text><text class="l" x="598" y="385">145.700</text><text class="l" x="598" y="418">145.020</text><text class="l" x="598" y="451">144.340</text><text class="l" x="598" y="484">143.680</text><text class="l" x="598" y="517">143.000</text><text class="l" x="598" y="550">142.320</text><text class="l" x="598" y="583">141.640</text><text class="l" x="598" y="616">140.960</text><text class="l" x="598" y="649">140.280</text><text class="l" x="598" y="682">139.620</text>
<text class="l" x="596.5" y="695" style="letter-spacing:-.2px">100</text><text class="l" x="595" y="737" style="letter-spacing:-.2px">70</text>
<g fill="#fff" shape-rendering="crispEdges">
<rect x="594" y="205" width="41" height="12"/><rect x="594" y="218" width="41" height="12"/><rect x="594" y="231" width="41" height="12"/><rect x="594" y="240" width="41" height="12"/><rect x="594" y="256" width="41" height="12"/><rect x="594" y="275" width="41" height="12"/><rect x="594" y="289" width="41" height="12"/><rect x="594" y="299" width="41" height="12"/><rect x="594" y="318" width="41" height="12"/><rect x="594" y="331" width="41" height="12"/><rect x="594" y="588" width="41" height="12"/>
</g>
<text class="b" x="598" y="215">149.194</text><text class="b" x="598" y="227">148.924</text><text class="b" x="598" y="240">148.654</text><text class="b" x="598" y="249">148.471</text><text class="b" x="598" y="265">148.148</text><text class="b" x="598" y="284">147.760</text><text class="b" x="598" y="298">147.469</text><text class="b" x="598" y="308">147.255</text><text class="b" x="598" y="327">146.879</text><text class="b" x="598" y="340">146.607</text><text class="b" x="598" y="597">141.336</text>
</g>
<!-- right axis -->
<g>
<text class="l" x="1802" y="58">149.140</text><text class="l" x="1802" y="91">148.980</text><text class="l" x="1802" y="124">148.820</text><text class="l" x="1802" y="158">148.660</text><text class="l" x="1802" y="224">148.350</text><text class="l" x="1802" y="257">148.190</text><text class="l" x="1802" y="290">148.030</text><text class="l" x="1802" y="323">147.870</text><text class="l" x="1802" y="355">147.720</text><text class="l" x="1802" y="388">147.560</text><text class="l" x="1802" y="421">147.400</text><text class="l" x="1802" y="488">147.090</text><text class="l" x="1802" y="521">146.930</text><text class="l" x="1802" y="587">146.620</text><text class="l" x="1802" y="620">146.450</text><text class="l" x="1802" y="653">146.300</text><text class="l" x="1802" y="686">146.140</text>
<text class="l" x="1800" y="697" style="letter-spacing:-.2px">100</text><text class="l" x="1799" y="741" style="letter-spacing:-.2px">70</text>
<g fill="#fff" shape-rendering="crispEdges">
<rect x="1798" y="71" width="29" height="12"/><rect x="1798" y="90" width="29" height="12"/><rect x="1798" y="182" width="29" height="12"/><rect x="1798" y="255" width="29" height="12"/><rect x="1798" y="336" width="29" height="12"/><rect x="1798" y="397" width="29" height="12"/><rect x="1798" y="442" width="29" height="12"/><rect x="1798" y="521" width="29" height="12"/><rect x="1798" y="546" width="29" height="12"/><rect x="1798" y="557" width="29" height="12"/><rect x="1798" y="590" width="29" height="12"/>
</g>
<text class="b" x="1802" y="80">149.024</text><text class="b" x="1802" y="99">148.931</text><text class="b" x="1802" y="191">148.501</text><text class="b" x="1802" y="264">148.148</text><text class="b" x="1802" y="345">147.760</text><text class="b" x="1802" y="406">147.469</text><text class="b" x="1802" y="451">147.255</text><text class="b" x="1802" y="530">146.820</text><text class="b" x="1802" y="555">146.750</text><text class="b" x="1802" y="566">146.700</text><text class="b" x="1802" y="599">146.540</text>
</g>
<!-- yellow rectangles -->
<g fill="none" stroke="#ffec00" stroke-width="3" shape-rendering="crispEdges">
<rect x="383.5" y="234.5" width="212" height="115"/>
<rect x="719.5" y="414.5" width="1010" height="154"/>
</g>
</svg>
</body></html>
